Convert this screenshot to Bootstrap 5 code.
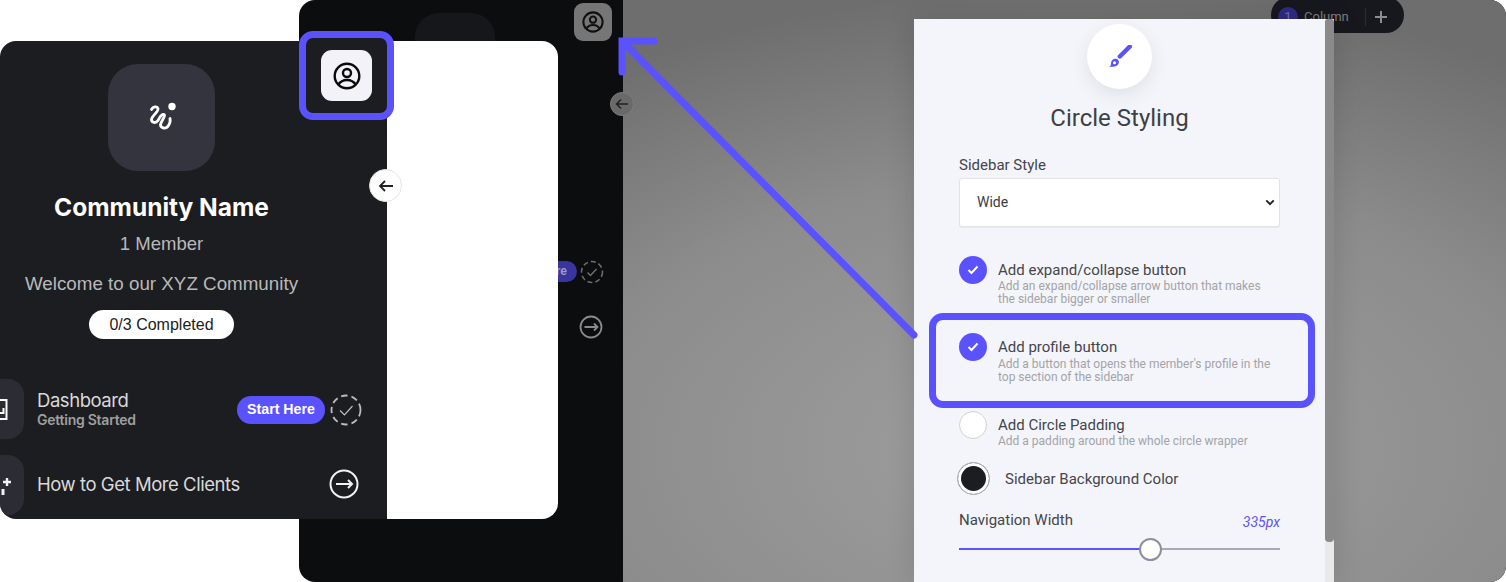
<!DOCTYPE html>
<html lang="en">
<head>
    <meta charset="UTF-8">
    <meta name="viewport" content="width=device-width, initial-scale=1.0">
    <title>Circle Styling</title>
    <link href="https://cdn.jsdelivr.net/npm/bootstrap@5.3.0/dist/css/bootstrap.min.css" rel="stylesheet">
    <style>
        html, body { height: 100%; }
        body { background: #fff; overflow: hidden; font-family: "Roboto", sans-serif; color: #3c3c3c; }
        .stage { position: relative; width: 1506px; height: 582px; overflow: hidden; }

        /* background app */
        .back-shell { position: absolute; left: 299px; top: 0; width: 1207px; height: 582px; border-radius: 16px; overflow: hidden; background: #0c0d0f; }
        .back-main { position: absolute; left: 324px; top: 0; right: 0; bottom: 0; background: radial-gradient(ellipse 820px 460px at 442px 450px, #a0a0a0 0%, #8c8c8c 60%, #6e6e6e 100%); }
        .back-logo { position: absolute; left: 116px; top: 13px; width: 80px; height: 80px; border-radius: 24px; background: #16171a; }
        .back-profile { position: absolute; left: 275px; top: 3px; width: 38px; height: 38px; border-radius: 9px; background: #767676; }
        .back-collapse { position: absolute; left: 610px; top: 92px; width: 24px; height: 24px; border-radius: 50%; background: #696969; border: 1px solid #7c7c7c; }
        .back-pill { position: absolute; left: 240px; top: 261px; width: 38px; height: 21px; border-radius: 0 11px 11px 0; background: #3a349f; color: #a09ec0; font: 700 12px "Liberation Sans", sans-serif; line-height: 21px; padding-left: 10px; }
        .back-check { position: absolute; left: 281px; top: 260px; }
        .back-go { position: absolute; left: 280px; top: 315px; }
        .column-pill { position: absolute; left: 1271px; top: -3px; width: 133px; height: 36px; border-radius: 18px; background: #17181d; color: #7d7e80; font-size: 13px; padding-top: 3px; }
        .column-num { width: 20px; height: 20px; border-radius: 50%; background: #302a87; color: #77749f; font-size: 13px; margin: 0 6px 0 7px; }
        .column-sep { width: 1px; height: 18px; background: #2c2d31; }

        /* front card */
        .front-card { position: absolute; left: 0; top: 41px; width: 558px; height: 478px; border-radius: 16px; overflow: hidden; background: #fff; }
        .front-side { width: 387px; height: 100%; padding-top: 23px; background: #1c1d21; color: #fff; font-family: "Liberation Sans", sans-serif; position: relative; }
        .logo-tile { width: 107px; height: 107px; border-radius: 30px; background: #34343e; margin-left: 108px; }
        .front-head { width: 323px; }
        .front-name { font-family: "Inter", sans-serif; font-size: 24.500px; font-weight: 700; letter-spacing: 0; margin-top: 20px; line-height: 32px; white-space: nowrap; }
        .front-members { font-size: 18.500px; color: #b9b9b9; margin-top: 10px; line-height: 22px; }
        .front-welcome { font-size: 18.800px; color: #b9b9b9; margin-top: 17px; line-height: 24px; white-space: nowrap; }
        .front-done { background: #fff; color: #1c1d21; font-size: 16px; border-radius: 15px; width: 145px; height: 29px; line-height: 29px; margin: 14px auto 0; }
        .nav-row { position: absolute; left: 0; width: 387px; height: 60px; }
        .nav-row-first { top: 338px; }
        .nav-row-second { top: 414px; }
        .nav-tile { position: absolute; left: -36px; top: 0; width: 60px; height: 60px; border-radius: 16px; background: #2c2d34; }
        .nav-glyph { position: absolute; left: 0; top: 0; }
        .nav-title { position: absolute; left: 37px; top: 9px; font-family: "Inter", sans-serif; font-size: 18.500px; letter-spacing: -.45px; color: #d9d9d9; white-space: nowrap; line-height: 24px; }
        .nav-row-second .nav-title { top: 17px; }
        .nav-sub { position: absolute; left: 37px; top: 32px; font-family: "Inter", sans-serif; font-size: 14px; font-weight: 600; letter-spacing: -.25px; color: #9f9f9f; white-space: nowrap; line-height: 18px; }
        .start-pill { position: absolute; left: 237px; top: 17px; width: 88px; height: 28px; border-radius: 14px; background: #5b52ff; color: #fff; font-size: 14.200px; font-weight: 700; line-height: 26px; text-align: center; }
        .nav-check { position: absolute; left: 330px; top: 15px; }
        .nav-go { position: absolute; left: 329px; top: 14px; }
        .collapse-btn { position: absolute; left: 369px; top: 169px; width: 33px; height: 33px; border-radius: 50%; background: #fff; border: 1px solid #e4e4e4; }

        /* callouts */
        .callout { position: absolute; border: 7px solid #5b52ff; border-radius: 14px; }
        .callout-profile { left: 299px; top: 31px; width: 95px; height: 89px; background: #1c1d21; }
        .callout-option { left: 929px; top: 313px; width: 386px; height: 95px; }
        .profile-tile { position: absolute; left: 321px; top: 50px; width: 51px; height: 51px; border-radius: 11px; background: #f2f2f8; }
        .big-arrow { position: absolute; left: 0; top: 0; pointer-events: none; }

        /* settings panel */
        .panel { position: absolute; left: 914px; top: 19px; width: 420px; height: 563px; background: #f4f5fa; padding: 5px 54px 0 45px; box-shadow: 0 0 28px rgba(0, 0, 0, .14); }
        .panel-track { position: absolute; right: 0; top: 0; width: 9px; height: 100%; background: #e9e9ec; }
        .panel-thumb { height: 523px; border-radius: 3px 3px 4px 4px; background: #8a8a8a; }
        .brush-disc { width: 65px; height: 65px; border-radius: 50%; background: #fff; box-shadow: 0 6px 18px rgba(60, 60, 90, .1); margin: 0 auto; }
        .panel-title { font-size: 24px; font-weight: 400; color: #3f3f46; text-align: center; margin: 13px 0 0; line-height: 32px; }
        .field-label { font-size: 15px; color: #45454c; line-height: 20px; margin-top: 21px; }
        .panel .form-select { width: 321px; height: 49px; margin-top: 3px; border: 1px solid #e3e3e6; border-radius: 3px; font-size: 14px; color: #3c3c44; padding: 0 17px; box-shadow: 0 1px 1px rgba(0,0,0,.05); background-image: url("data:image/svg+xml,%3csvg xmlns='http://www.w3.org/2000/svg' viewBox='0 0 12 8'%3e%3cpath fill='none' stroke='%23222' stroke-width='2.200' d='M1.500 1.500l4.500 4.500 4.500-4.500'/%3e%3c/svg%3e"); background-position: right 4px center; background-size: 10px 7px; }
        .opt-row { display: flex; gap: 11px; }
        .opt-row-first { margin-top: 29px; }
        .opt-row-second { margin-top: 27px; }
        .opt-row-second .opt-desc { margin-top: 2px; }
        .opt-row-third { margin-top: 27px; }
        .opt-mark { flex: none; width: 28px; height: 28px; border-radius: 50%; background: #5b52ff; }
        .opt-mark.is-off { background: #fff; border: 1px solid #d2d2d2; }
        .opt-title { font-size: 15px; color: #45454c; line-height: 18px; padding-top: 5px; }
        .opt-desc { font-size: 12px; color: #a3a3a8; line-height: 13px; margin-top: 1px; }
        .swatch-row { display: flex; align-items: center; gap: 15px; margin-top: 14px; }
        .swatch { width: 33px; height: 33px; border-radius: 50%; border: 1px solid #bbb; background: #1c1d21; box-shadow: inset 0 0 0 3px #fff; margin-left: -2px; }
        .range-head { display: flex; justify-content: space-between; align-items: flex-start; width: 321px; margin-top: 16px; }
        .range-value { font-size: 14px; font-style: italic; color: #5b52ff; line-height: 18px; margin-top: 2px; }
        .range-track { position: relative; width: 321px; height: 2px; background: #a9a9bb; margin-top: 17px; }
        .range-fill { position: absolute; left: 0; top: 0; height: 2px; background: #5b52ff; }
        .range-knob { position: absolute; left: 180px; top: -10px; width: 23px; height: 23px; border-radius: 50%; background: #fff; border: 2px solid #8f8f98; }
    </style>
</head>
<body>
<div class="stage">
    <!-- app behind the modal -->
    <div class="back-shell">
        <div class="back-logo"></div>
        <div class="back-main"></div>
        <div class="back-profile d-flex align-items-center justify-content-center">
            <svg width="22" height="22" viewBox="0 0 24 24" fill="none" stroke="#101010" stroke-width="2.200"><circle cx="12" cy="12" r="10.500"/><circle cx="12" cy="9.500" r="3.400"/><path d="M4.500 19.500c2-3.200 4.500-4.200 7.500-4.200s5.500 1 7.500 4.200"/></svg>
        </div>
        <div class="back-pill">ere</div>
        <svg class="back-check" width="24" height="24" viewBox="0 0 24 24" fill="none" stroke="#6e6e6e" stroke-width="1.500"><circle cx="12" cy="12" r="10.500" stroke-dasharray="5 3"/><path d="M7.500 12.500l3 3 6-6.500"/></svg>
        <svg class="back-go" width="24" height="24" viewBox="0 0 24 24" fill="none" stroke="#8a8a8a" stroke-width="1.800"><circle cx="12" cy="12" r="10.500"/><path d="M5.500 12h13M15 8.500l3.500 3.500-3.500 3.500"/></svg>
    </div>
    <div class="back-collapse d-flex align-items-center justify-content-center">
        <svg width="14" height="12" viewBox="0 0 14 12" fill="none" stroke="#222" stroke-width="1.500"><path d="M13 6H1.500M6 1.500L1.500 6 6 10.500"/></svg>
    </div>
    <div class="column-pill d-flex align-items-center">
        <span class="column-num d-flex align-items-center justify-content-center">1</span>
        <span>Column</span>
        <span class="column-sep ms-3"></span>
        <svg class="ms-2" width="14" height="14" viewBox="0 0 14 14" stroke="#8c8d90" stroke-width="2"><path d="M7 1v12M1 7h12"/></svg>
    </div>

    <!-- enlarged preview -->
    <div class="front-card">
        <div class="front-side">
            <div class="logo-tile d-flex align-items-center justify-content-center">
                <svg width="45" height="40" viewBox="-1 2.500 45 40" fill="none" stroke="#fff" stroke-width="2.800" stroke-linecap="round" stroke-linejoin="round"><path d="M11.500 14C13 11 17 10.500 18 13C19 16 12 20 11.500 24C11.500 27.500 16 28 18 25C20 22 21 18 24 19C26 20 21 26 20.500 29C20.500 33 26 34 28.500 30C30 27.500 30.500 25 30 23"/><circle cx="32" cy="11" r="3.700" fill="#fff" stroke="none"/></svg>
            </div>
            <div class="front-head text-center">
                <div class="front-name">Community Name</div>
                <div class="front-members">1 Member</div>
                <div class="front-welcome">Welcome to our XYZ Community</div>
                <div class="front-done">0/3 Completed</div>
            </div>
            <div class="nav-row nav-row-first">
                <span class="nav-tile"></span>
                <svg class="nav-glyph" width="10" height="60" viewBox="0 0 10 60" fill="none" stroke="#fff" stroke-width="2"><path d="M0 21h6.500v19H0M0 34h3.500v-5"/></svg>
                <span class="nav-title">Dashboard</span>
                <span class="nav-sub">Getting Started</span>
                <span class="start-pill">Start Here</span>
                <svg class="nav-check" width="32" height="32" viewBox="0 0 32 32" fill="none" stroke="#bdbdbd"><circle cx="16" cy="16" r="14.500" stroke-width="1.800" stroke-dasharray="6.500 4"/><path d="M10 16.500l4.500 4.500 8-9" stroke-width="1.200"/></svg>
            </div>
            <div class="nav-row nav-row-second">
                <span class="nav-tile"></span>
                <svg class="nav-glyph" width="12" height="60" viewBox="0 0 12 60" fill="none" stroke="#f2f2f2"><path d="M7 23v8M3 27h8" stroke-width="2.400"/><path d="M3 34v6" stroke-width="3"/></svg>
                <span class="nav-title">How to Get More Clients</span>
                <svg class="nav-go" width="30" height="30" viewBox="0 0 30 30" fill="none" stroke="#f2f2f2" stroke-width="2"><circle cx="15" cy="15" r="13.500"/><path d="M7 15h16M19 11l4 4-4 4"/></svg>
            </div>
        </div>
    </div>
    <div class="collapse-btn d-flex align-items-center justify-content-center">
        <svg width="16" height="14" viewBox="0 0 16 14" fill="none" stroke="#222" stroke-width="1.800"><path d="M15 7H2M7 2L2 7l5 5"/></svg>
    </div>

    <!-- settings panel -->
    <div class="panel">
        <div class="panel-track"><div class="panel-thumb"></div></div>
        <div class="brush-disc d-flex align-items-center justify-content-center">
            <svg width="24" height="24" viewBox="0 0 24 24" fill="#5b52ff"><path d="M21.800 1.500L11.800 11.500" stroke="#5b52ff" stroke-width="4.400" stroke-linecap="round"/><path fill-rule="evenodd" d="M.5 21.500c2 0 2.500-1 2.500-3 0-3 2-4.800 4.500-4.800s3.800 1.800 3.300 4.200c-.6 2.800-3.800 4.300-10.300 3.600zM6.500 16.200a1.500 1.500 0 1 0 0 3 1.500 1.500 0 1 0 0-3z"/></svg>
        </div>
        <h1 class="panel-title">Circle Styling</h1>
        <div class="field-label">Sidebar Style</div>
        <select class="form-select"><option>Wide</option></select>

        <div class="opt-row opt-row-first">
            <span class="opt-mark d-flex align-items-center justify-content-center"><svg width="12" height="10" viewBox="0 0 12 10" fill="none" stroke="#fff" stroke-width="2"><path d="M1.500 5l3 3 6-6.500"/></svg></span>
            <div>
                <div class="opt-title">Add expand/collapse button</div>
                <div class="opt-desc">Add an expand/collapse arrow button that makes<br>the sidebar bigger or smaller</div>
            </div>
        </div>
        <div class="opt-row opt-row-second">
            <span class="opt-mark d-flex align-items-center justify-content-center"><svg width="12" height="10" viewBox="0 0 12 10" fill="none" stroke="#fff" stroke-width="2"><path d="M1.500 5l3 3 6-6.500"/></svg></span>
            <div>
                <div class="opt-title">Add profile button</div>
                <div class="opt-desc">Add a button that opens the member's profile in the<br>top section of the sidebar</div>
            </div>
        </div>
        <div class="opt-row opt-row-third">
            <span class="opt-mark is-off"></span>
            <div>
                <div class="opt-title">Add Circle Padding</div>
                <div class="opt-desc">Add a padding around the whole circle wrapper</div>
            </div>
        </div>
        <div class="swatch-row">
            <span class="swatch"></span>
            <span class="opt-title p-0">Sidebar Background Color</span>
        </div>
        <div class="range-head">
            <span class="opt-title p-0">Navigation Width</span>
            <span class="range-value">335px</span>
        </div>
        <div class="range-track">
            <div class="range-fill" style="width:181px"></div>
            <div class="range-knob"></div>
        </div>
    </div>

    <!-- callouts over everything -->
    <div class="callout callout-profile"></div>
    <div class="profile-tile d-flex align-items-center justify-content-center">
        <svg width="28" height="28" viewBox="0 0 28 28" fill="none" stroke="#0b0b0b" stroke-width="2.400"><circle cx="14" cy="14" r="12.300"/><circle cx="14" cy="11" r="4"/><path d="M5 23c2.500-3.800 5.500-5 9-5s6.500 1.200 9 5"/></svg>
    </div>
    <div class="callout callout-option"></div>
    <svg class="big-arrow" width="1506" height="582" fill="none" stroke="#5b52ff" stroke-width="7" stroke-linecap="round"><path d="M914 335L624 43M622 72V41H654"/></svg>
</div>
<script src="https://cdn.jsdelivr.net/npm/bootstrap@5.3.0/dist/js/bootstrap.bundle.min.js"></script>
</body>
</html>
